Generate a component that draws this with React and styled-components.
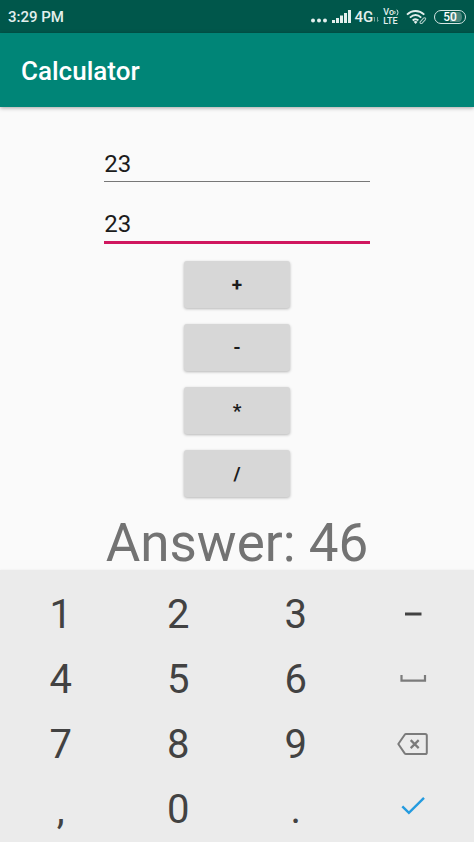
import React, { useState } from 'react';
import styled, { createGlobalStyle } from 'styled-components';

const GlobalStyle = createGlobalStyle`
  * {
    box-sizing: border-box;
  }

  body {
    margin: 0;
    background-color: #fafafa;
    font-family: Roboto, sans-serif;
  }
`;

const Screen = styled.div`
  display: flex;
  flex-direction: column;
  min-height: 100vh;
  background-color: #fafafa;
`;

const StatusBar = styled.div`
  display: flex;
  align-items: center;
  justify-content: space-between;
  height: 33px;
  padding: 0 8px;
  background-color: #00574b;
  color: #e3efed;
`;

const Clock = styled.span`
  font-size: 15px;
  font-weight: 500;
  line-height: 20px;
`;

const StatusIcons = styled.div`
  display: flex;
  align-items: center;
  gap: 4px;

  svg {
    display: block;
  }
`;

const Network = styled.span`
  display: flex;
  align-items: center;
  font-size: 15px;
  font-weight: 500;
  line-height: 20px;
`;

const VoLte = styled.span`
  display: flex;
  flex-direction: column;
  padding: 0 3px 0 0;
  font-size: 9px;
  font-weight: 500;
  line-height: 9px;
`;

const VoRow = styled.span`
  display: flex;
  align-items: center;
`;

const Battery = styled.span`
  width: 32px;
  height: 14px;
  margin-left: 3px;
  border: 1px solid #d5e6e3;
  border-radius: 7px;
  background: linear-gradient(90deg, #00574b 50%, #4a857c 50%);
  background-clip: content-box;
  padding: 1px 3px;
  color: #ffffff;
  font-size: 12px;
  font-weight: 500;
  line-height: 10px;
  text-align: center;
`;

const AppBar = styled.header`
  display: flex;
  align-items: center;
  height: 74px;
  padding: 2px 21px 0;
  background-color: #008577;
  box-shadow: 0 1px 4px rgba(0, 0, 0, 0.35);
`;

const Title = styled.h1`
  margin: 0;
  color: white;
  font-size: 26px;
  font-weight: 500;
  line-height: 32px;
`;

const Content = styled.main`
  display: flex;
  flex-direction: column;
  flex-grow: 1;
  align-items: center;
  padding-top: 34px;
`;

const NumberField = styled.input`
  width: 56%;
  height: 40px;
  margin-bottom: 20px;
  padding: 5px 0 0;
  border: none;
  border-radius: 0;
  background: transparent;
  box-shadow: 0 ${props => (props.$active ? '3px #d0175f' : '1px #777777')};
  color: #1c1c1c;
  font-family: inherit;
  font-size: 24px;
  line-height: 28px;
  outline: none;
`;

const Operations = styled.div`
  display: flex;
  flex-direction: column;
  gap: 16px;
  width: 106px;
`;

const OperationButton = styled.button`
  height: 47px;
  padding: 0;
  border: none;
  border-radius: 3px;
  background-color: #d7d7d7;
  box-shadow: 0 1px 3px rgba(0, 0, 0, 0.28);
  color: #1c1c1c;
  font-family: inherit;
  font-size: 19px;
  font-weight: 700;
  cursor: pointer;
`;

const Answer = styled.output`
  display: block;
  padding: 19px 0 0;
  color: #737373;
  font-size: 53px;
  line-height: 54px;
`;

const Keyboard = styled.div`
  display: grid;
  grid-template-columns: repeat(4, 1fr);
  grid-auto-rows: 65px;
  padding: 12px 2px 0;
  background-color: #ebebeb;
  box-shadow: 0 0 2px #ebebeb;
`;

const Key = styled.button`
  display: flex;
  align-items: center;
  justify-content: center;
  padding: 0;
  border: none;
  background: transparent;
  color: ${props => props.$color || '#424242'};
  font-family: inherit;
  font-size: 40px;
  line-height: 48px;
  cursor: pointer;
`;

const SignalIcon = () => (
  <svg width="19" height="14" viewBox="0 0 19 14" fill="currentColor">
    <rect x="0" y="10" width="3" height="3" />
    <rect x="4" y="8" width="3" height="5" />
    <rect x="8" y="5.5" width="3" height="7.5" />
    <rect x="12" y="3" width="3" height="10" />
    <rect x="16" y="0" width="3" height="13" />
  </svg>
);

const DotsIcon = () => (
  <svg width="17" height="14" viewBox="0 0 17 14" fill="currentColor">
    <circle cx="2" cy="10.5" r="2" />
    <circle cx="8" cy="10.5" r="2" />
    <circle cx="14" cy="10.5" r="2" />
  </svg>
);

const DataIcon = () => (
  <svg width="6" height="14" viewBox="0 0 6 14" fill="none" stroke="currentColor" opacity="0.5">
    <path d="M1.5 11.5V7L.5 8.2M4.5 7v4.5l1-1.2" />
  </svg>
);

const VolumeIcon = () => (
  <svg width="5" height="7" viewBox="0 0 5 7" fill="none" stroke="currentColor">
    <path d="M.5 2c.8 1 .8 2 0 3M2.8.7c1.5 1.8 1.5 3.8 0 5.6" />
  </svg>
);

const WifiIcon = () => (
  <svg width="21" height="16" viewBox="0 0 21 16" fill="none" stroke="currentColor">
    <path strokeWidth="1.9" d="M1 5.6C6 .8 13 .8 18.3 5.6M3.9 8.6c3.6-3.2 7.8-3.2 11.3 0M6.7 11.4c1.9-1.6 3.9-1.6 5.7 0" />
    <path fill="currentColor" stroke="none" d="M7.6 12.8c1.3-1.1 2.7-1.1 4 0l-2 2.3z" />
    <path strokeWidth="1.1" opacity="0.75" d="M14.2 12.8l3.3-3.7c1.2-1 2.8.3 1.9 1.5l-3.2 3.6c-1.2.9-2.8-.2-2-1.4z" />
  </svg>
);

const MinusIcon = () => (
  <svg width="32" height="24" viewBox="0 0 32 24" fill="none" stroke="currentColor" strokeWidth="3">
    <path d="M8 11h16.5" />
  </svg>
);

const SpaceIcon = () => (
  <svg width="32" height="24" viewBox="0 0 32 24" fill="none" stroke="currentColor" strokeWidth="2.2">
    <path d="M4.5 7v5.6h23.5V7" />
  </svg>
);

const BackspaceIcon = () => (
  <svg width="32" height="24" viewBox="0 0 32 24" fill="none" stroke="currentColor" strokeWidth="2" strokeLinejoin="round">
    <path d="M9 1h19.2q1.6 0 1.6 1.6v16.8q0 1.6-1.6 1.6H9q-.8 0-1.3-.7L1.3 11l6.4-9.3Q8.2 1 9 1z" />
    <path strokeWidth="2.2" d="M13.7 7.1l8 8M21.7 7.1l-8 8" />
  </svg>
);

const CheckIcon = () => (
  <svg width="32" height="32" viewBox="0 0 32 32" fill="none" stroke="currentColor" strokeWidth="2.4">
    <path d="M5.3 12.3l6.6 6.6L27 3.8" />
  </svg>
);

const operations = [
  { sign: '+', run: (a, b) => a + b },
  { sign: '-', run: (a, b) => a - b },
  { sign: '*', run: (a, b) => a * b },
  { sign: '/', run: (a, b) => a / b },
];

const keys = [
  { value: '1' },
  { value: '2' },
  { value: '3' },
  { value: '-', label: 'Minus', icon: <MinusIcon /> },
  { value: '4' },
  { value: '5' },
  { value: '6' },
  { value: ' ', label: 'Space', icon: <SpaceIcon />, color: '#7b7b7b' },
  { value: '7' },
  { value: '8' },
  { value: '9' },
  { value: 'delete', label: 'Backspace', icon: <BackspaceIcon />, color: '#7b7b7b' },
  { value: ',' },
  { value: '0' },
  { value: '.' },
  { value: 'done', label: 'Done', icon: <CheckIcon />, color: '#249bdf' },
];

const App = () => {
  const [numbers, setNumbers] = useState(['23', '23']);
  const [active, setActive] = useState(1);
  const [answer, setAnswer] = useState(46);

  const updateNumber = (index, value) => {
    setNumbers(numbers.map((number, i) => (i === index ? value : number)));
  };

  const pressKey = value => {
    if (value === 'done') return;
    if (value === 'delete') {
      updateNumber(active, numbers[active].slice(0, -1));
    } else {
      updateNumber(active, numbers[active] + value);
    }
  };

  return (
    <Screen>
      <GlobalStyle />
      <StatusBar>
        <Clock>3:29 PM</Clock>
        <StatusIcons>
          <DotsIcon />
          <SignalIcon />
          <Network>4G<DataIcon /></Network>
          <VoLte>
            <VoRow>Vo<VolumeIcon /></VoRow>
            <span>LTE</span>
          </VoLte>
          <WifiIcon />
          <Battery>50</Battery>
        </StatusIcons>
      </StatusBar>
      <AppBar>
        <Title>Calculator</Title>
      </AppBar>
      <Content>
        {numbers.map((number, index) => (
          <NumberField
            key={index}
            type="text"
            inputMode="decimal"
            aria-label={index === 0 ? 'First number' : 'Second number'}
            value={number}
            $active={active === index}
            onFocus={() => setActive(index)}
            onChange={e => updateNumber(index, e.target.value)}
          />
        ))}
        <Operations>
          {operations.map(({ sign, run }) => (
            <OperationButton key={sign} onClick={() => setAnswer(run(Number(numbers[0]), Number(numbers[1])))}>
              {sign}
            </OperationButton>
          ))}
        </Operations>
        <Answer>Answer: {answer}</Answer>
      </Content>
      <Keyboard>
        {keys.map(({ value, label, icon, color }) => (
          <Key key={value} aria-label={label} $color={color} onClick={() => pressKey(value)}>
            {icon || value}
          </Key>
        ))}
      </Keyboard>
    </Screen>
  );
};

export default App;
